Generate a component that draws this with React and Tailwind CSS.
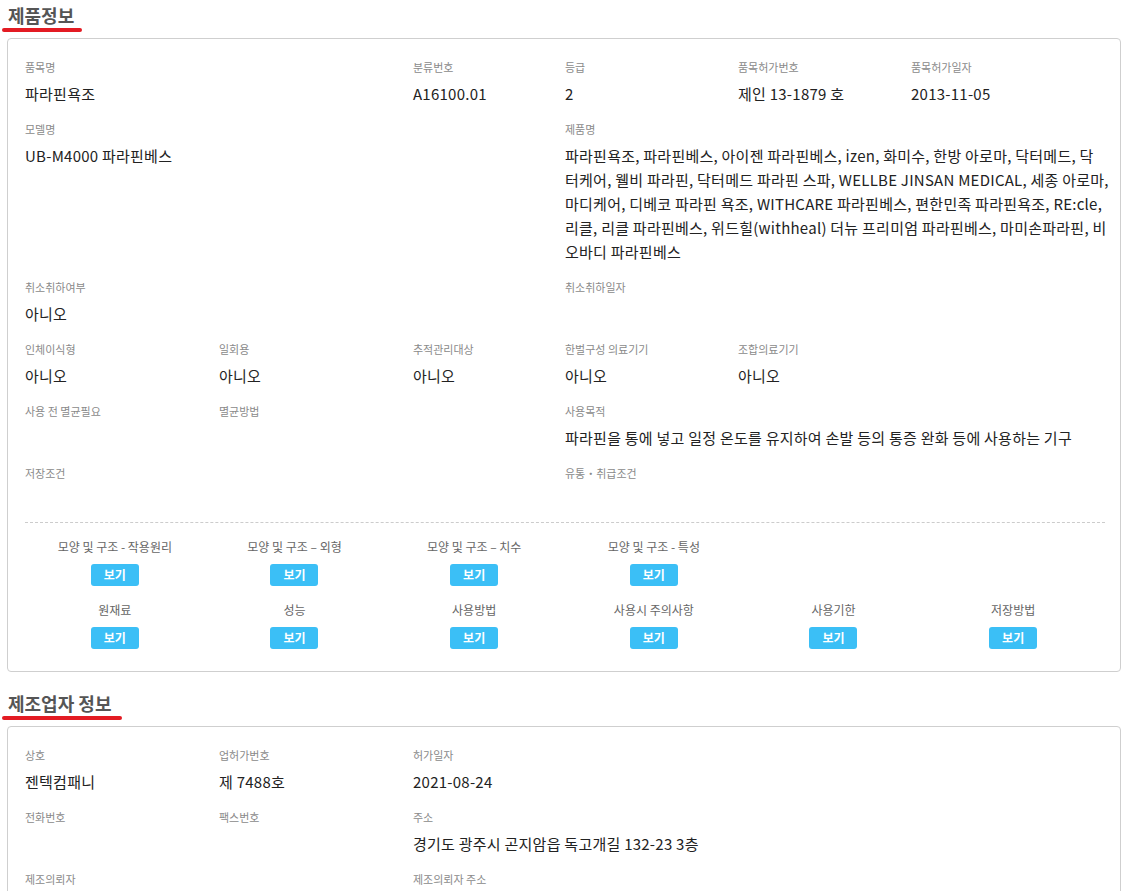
import React from "react";

const FONT = { fontFamily: '"Noto Sans CJK KR", "Noto Sans", sans-serif' };

function Field({ label, value, className = "", last = false }) {
  return (
    <div className={`${className} ${last ? "pb-[10px]" : "pb-[14px]"} min-w-0`}>
      <div className="text-[11px] leading-[18px] text-[#8a8a8a]">{label}</div>
      <div className="mt-[6px] min-h-[24px] text-[15px] leading-[24px] tracking-[0.25px] text-[#222]">{value}</div>
    </div>
  );
}

function Row({ children }) {
  return <div className="grid grid-cols-[194px_194px_152px_173px_173px_1fr]">{children}</div>;
}

function Heading({ text, width }) {
  return (
    <div>
      <div className="pl-[8px] text-[18px] font-bold leading-[24px] text-[#555]">{text}</div>
      <div className={`ml-[2px] mt-[1px] h-[4px] rounded-full bg-[#e31b23] ${width}`} />
    </div>
  );
}

function ViewCell({ label }) {
  if (!label) return <div />;
  return (
    <div className="flex flex-col items-center">
      <div className="text-[12px] leading-[18px] text-[#666] whitespace-nowrap">{label}</div>
      <button className="mt-[8px] h-[22px] w-[48px] rounded-[3px] bg-[#3bbff6] text-[12px] font-bold leading-[22px] text-white">
        보기
      </button>
    </div>
  );
}

const productLines = [
  "파라핀욕조, 파라핀베스, 아이젠 파라핀베스, izen, 화미수, 한방 아로마, 닥터메드, 닥",
  "터케어, 웰비 파라핀, 닥터메드 파라핀 스파, WELLBE JINSAN MEDICAL, 세종 아로마,",
  "마디케어, 디베코 파라핀 욕조, WITHCARE 파라핀베스, 편한민족 파라핀욕조, RE:cle,",
  "리클, 리클 파라핀베스, 위드힐(withheal) 더뉴 프리미엄 파라핀베스, 마미손파라핀, 비",
  "오바디 파라핀베스",
];

export default function App() {
  const productNames = (
    <>
      {productLines.map((l, i) => (
        <span key={i} className="block whitespace-nowrap">{l}</span>
      ))}
    </>
  );

  return (
    <div className="min-h-[891px] w-[1130px] bg-white pt-[3px]" style={FONT}>
      <Heading text="제품정보" width="w-[80px]" />
      <div className="ml-[7px] mr-[9px] mt-[6px] rounded-[4px] border border-[#cfcfcf] pb-[22px] pl-[17px] pr-[15px] pt-[19px]">
        <Row>
          <Field className="col-span-2" label="품목명" value="파라핀욕조" />
          <Field label="분류번호" value="A16100.01" />
          <Field label="등급" value="2" />
          <Field label="품목허가번호" value="제인 13-1879 호" />
          <Field label="품목허가일자" value="2013-11-05" />
        </Row>
        <Row>
          <Field className="col-span-3" label="모델명" value="UB-M4000 파라핀베스" />
          <Field className="col-span-3" label="제품명" value={productNames} />
        </Row>
        <Row>
          <Field className="col-span-3" label="취소취하여부" value="아니오" />
          <Field className="col-span-3" label="취소취하일자" value="" />
        </Row>
        <Row>
          <Field label="인체이식형" value="아니오" />
          <Field label="일회용" value="아니오" />
          <Field label="추적관리대상" value="아니오" />
          <Field label="한벌구성 의료기기" value="아니오" />
          <Field className="col-span-2" label="조합의료기기" value="아니오" />
        </Row>
        <Row>
          <Field label="사용 전 멸균필요" value="" />
          <Field className="col-span-2" label="멸균방법" value="" />
          <Field className="col-span-3" label="사용목적" value="파라핀을 통에 넣고 일정 온도를 유지하여 손발 등의 통증 완화 등에 사용하는 기구" />
        </Row>
        <Row>
          <Field className="col-span-3" label="저장조건" value="" last />
          <Field className="col-span-3" label="유통・취급조건" value="" last />
        </Row>
        <div className="border-t border-dashed border-[#cccccc] pt-[15px]">
          <div className="grid grid-cols-6 gap-y-[15px] pr-[2px]">
            <ViewCell label="모양 및 구조 - 작용원리" />
            <ViewCell label="모양 및 구조 – 외형" />
            <ViewCell label="모양 및 구조 – 치수" />
            <ViewCell label="모양 및 구조 - 특성" />
            <ViewCell />
            <ViewCell />
            <ViewCell label="원재료" />
            <ViewCell label="성능" />
            <ViewCell label="사용방법" />
            <ViewCell label="사용시 주의사항" />
            <ViewCell label="사용기한" />
            <ViewCell label="저장방법" />
          </div>
        </div>
      </div>

      <div className="mt-[19px]">
        <Heading text="제조업자 정보" width="w-[120px]" />
      </div>
      <div className="ml-[7px] mr-[9px] mt-[6px] rounded-[4px] border border-[#cfcfcf] pb-[20px] pl-[17px] pr-[15px] pt-[19px]">
        <Row>
          <Field label="상호" value="젠텍컴패니" />
          <Field label="업허가번호" value="제 7488호" />
          <Field className="col-span-4" label="허가일자" value="2021-08-24" />
        </Row>
        <Row>
          <Field label="전화번호" value="" />
          <Field label="팩스번호" value="" />
          <Field className="col-span-4" label="주소" value="경기도 광주시 곤지암읍 독고개길 132-23 3층" />
        </Row>
        <Row>
          <Field className="col-span-2" label="제조의뢰자" value="" />
          <Field className="col-span-4" label="제조의뢰자 주소" value="" />
        </Row>
      </div>
    </div>
  );
}
